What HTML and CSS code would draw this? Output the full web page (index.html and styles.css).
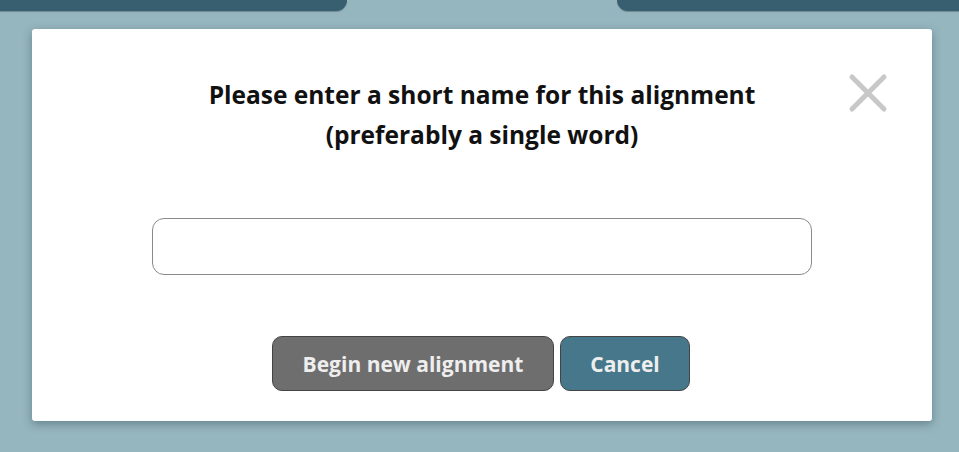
FILE: index.html
```html
<!DOCTYPE html>
<html>
<head>
<meta charset="utf-8">
<link rel="stylesheet" href="styles.css">
</head>
<body>
<div class="tabs">
  <div class="tab tab-left"></div>
  <div class="tab tab-right"></div>
</div>
<div class="modal">
  <button class="close" aria-label="Close">
    <svg width="40" height="40" viewBox="0 0 40 40"><path d="M4 4 L36 36 M36 4 L4 36" stroke="#c8c8c8" stroke-width="5" stroke-linecap="round" fill="none"/></svg>
  </button>
  <h2 class="title">Please enter a short name for this alignment<br>(preferably a single word)</h2>
  <input class="name-input" type="text">
  <div class="actions">
    <button class="btn btn-begin">Begin new alignment</button>
    <button class="btn btn-cancel">Cancel</button>
  </div>
</div>
</body>
</html>
```
FILE: styles.css
```css
html, body {
  margin: 0;
  padding: 0;
  height: 100%;
}
body {
  background: #96b6bf;
  font-family: "Open Sans", Lato, sans-serif;
  overflow: hidden;
}
.tabs {
  display: flex;
  justify-content: space-between;
  height: 11px;
}
.tab {
  background: #385f70;
  height: 11px;
  box-shadow: 0 1px 1px rgba(0,0,0,0.25);
}
.tab-left {
  width: 347px;
  border-bottom-right-radius: 14px;
}
.tab-right {
  width: 342px;
  border-bottom-left-radius: 14px;
}
.modal {
  position: relative;
  margin: 18px 0 0 32px;
  width: 900px;
  height: 392px;
  box-sizing: border-box;
  background: #fff;
  border-radius: 3px;
  box-shadow: 0 3px 10px rgba(40,70,80,0.45);
  padding-top: 46px;
  display: flex;
  flex-direction: column;
  align-items: center;
}
.close {
  position: absolute;
  top: 44px;
  right: 44px;
  width: 40px;
  height: 40px;
  padding: 0;
  border: 0;
  background: none;
}
.close svg { display: block; }
.title {
  margin: 0;
  font-size: 24.5px;
  line-height: 40px;
  font-weight: 700;
  color: #111;
  text-align: center;
}
.name-input {
  margin-top: 63px;
  width: 660px;
  height: 57px;
  box-sizing: border-box;
  border: 1px solid #8a8a8a;
  border-radius: 12px;
  background: #fff;
}
.actions {
  margin-top: 61px;
  display: flex;
  gap: 6px;
  margin-right: 2px;
}
.btn {
  height: 55px;
  box-sizing: border-box;
  border: 1px solid #444;
  border-radius: 10px;
  font-family: inherit;
  font-size: 21px;
  font-weight: 700;
  color: #eeeeee;
  padding: 0;
}
.btn-begin {
  width: 282px;
  background: #6e6e6e;
}
.btn-cancel {
  width: 130px;
  background: #46778a;
}
```
